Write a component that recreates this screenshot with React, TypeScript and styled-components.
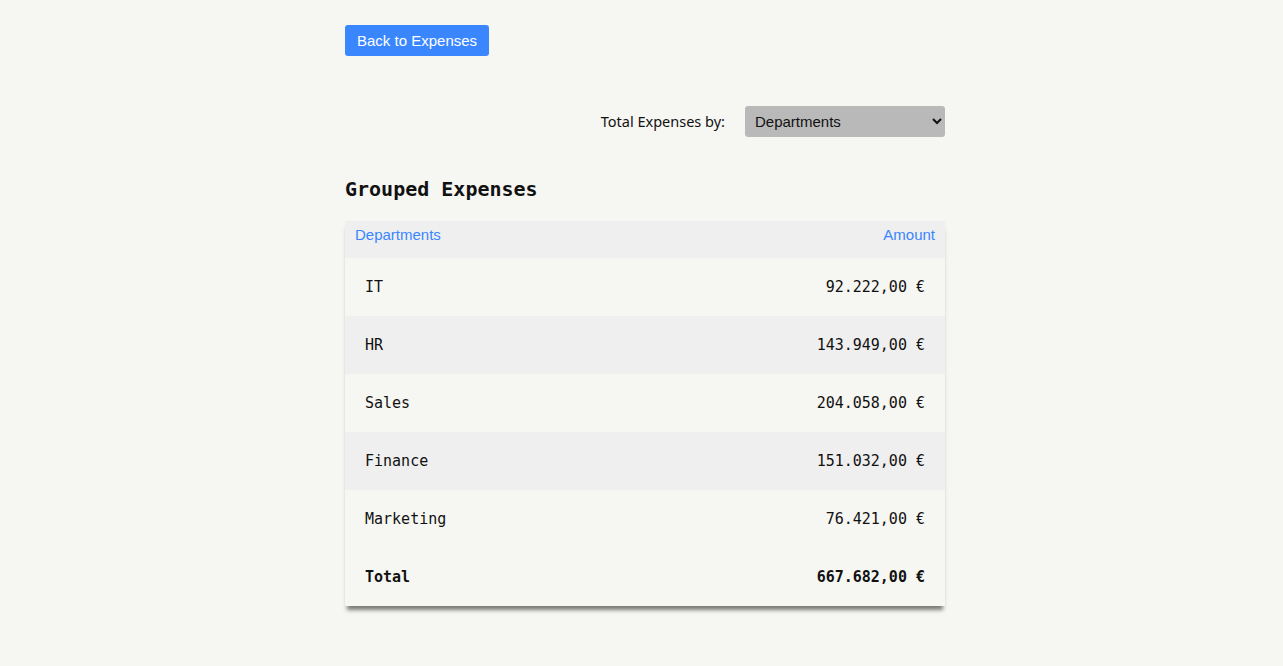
import React from "react";
import styled, { createGlobalStyle } from "styled-components";

const Global = createGlobalStyle`
  html, body { margin: 0; padding: 0; background: #f6f6f2; }
  body { font-family: "Liberation Sans", Arial, sans-serif; }
`;

const Shell = styled.div`
  padding-left: 7px;
`;

const Page = styled.div`
  width: 600px;
  margin: 0 auto;
  padding-top: 25px;
  padding-bottom: 40px;
  display: flex;
  flex-direction: column;
`;

const BackButton = styled.button`
  align-self: flex-start;
  height: 31px;
  padding: 0 12px;
  border: none;
  border-radius: 3px;
  background: #3a86ff;
  color: #ffffff;
  font-family: "Liberation Sans", Arial, sans-serif;
  font-size: 15px;
  cursor: pointer;
`;

const FilterRow = styled.div`
  display: flex;
  justify-content: flex-end;
  align-items: center;
  gap: 20px;
  margin-top: 50px;
`;

const Label = styled.label`
  font-family: "Noto Sans", "Open Sans", sans-serif;
  font-size: 14.5px;
  line-height: 18px;
  padding-bottom: 2px;
  color: #111;
`;

const Select = styled.select`
  width: 200px;
  height: 31px;
  padding: 0 6px;
  border: none;
  border-radius: 3px;
  background: #b9b9b9;
  color: #111;
  font-family: "Liberation Sans", Arial, sans-serif;
  font-size: 15px;
`;

const Heading = styled.h2`
  margin: 40px 0 20px;
  font-family: "DejaVu Sans Mono", monospace;
  font-size: 20px;
  font-weight: bold;
  color: #111;
  line-height: 24px;
`;

const TableCard = styled.div`
  box-shadow: 0 6px 4px -2px rgba(0, 0, 0, 0.5);
`;

const Table = styled.table`
  width: 100%;
  border-collapse: collapse;
`;

const HeadCell = styled.th<{ $right?: boolean }>`
  padding: 5px 10px 15px;
  line-height: 17px;
  background: #efefef;
  color: #3a86ff;
  font-family: "Liberation Sans", Arial, sans-serif;
  font-size: 15px;
  font-weight: normal;
  text-align: ${(p) => (p.$right ? "right" : "left")};
`;

const Row = styled.tr<{ $alt?: boolean }>`
  background: ${(p) => (p.$alt ? "#efefef" : "#f6f6f2")};
`;

const Cell = styled.td<{ $right?: boolean; $bold?: boolean }>`
  height: 58px;
  padding: 0 20px;
  font-family: "DejaVu Sans Mono", monospace;
  font-size: 15px;
  color: #111;
  font-weight: ${(p) => (p.$bold ? "bold" : "normal")};
  text-align: ${(p) => (p.$right ? "right" : "left")};
`;

const rows = [
  ["IT", "92.222,00 €"],
  ["HR", "143.949,00 €"],
  ["Sales", "204.058,00 €"],
  ["Finance", "151.032,00 €"],
  ["Marketing", "76.421,00 €"],
];

export default function App() {
  return (
    <Shell>
      <Global />
      <Page>
        <BackButton>Back to Expenses</BackButton>
        <FilterRow>
          <Label>Total Expenses by:</Label>
          <Select defaultValue="Departments">
            <option>Departments</option>
            <option>Projects</option>
            <option>Employees</option>
          </Select>
        </FilterRow>
        <Heading>Grouped Expenses</Heading>
        <TableCard>
          <Table>
            <thead>
              <tr>
                <HeadCell>Departments</HeadCell>
                <HeadCell $right>Amount</HeadCell>
              </tr>
            </thead>
            <tbody>
              {rows.map(([name, amount], i) => (
                <Row key={name} $alt={i % 2 === 1}>
                  <Cell>{name}</Cell>
                  <Cell $right>{amount}</Cell>
                </Row>
              ))}
              <Row>
                <Cell $bold>Total</Cell>
                <Cell $right $bold>667.682,00 €</Cell>
              </Row>
            </tbody>
          </Table>
        </TableCard>
      </Page>
    </Shell>
  );
}
